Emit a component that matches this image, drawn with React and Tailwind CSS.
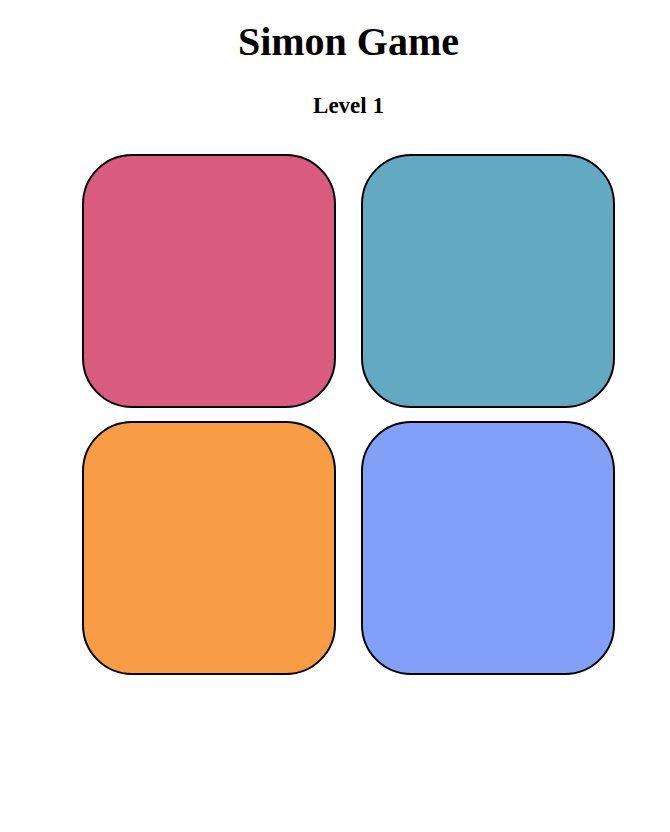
export default function App() {
  const serif = { fontFamily: '"Liberation Serif", "Times New Roman", serif' };
  return (
    <div className="w-[697px] flex flex-col items-center bg-white" style={serif}>
      <h1 className="mt-[20px] text-[40px] leading-[44px] font-bold text-black">Simon Game</h1>
      <h2 className="mt-[29px] text-[23px] leading-[26px] font-bold text-black">Level 1</h2>
      <div className="mt-[35px] grid grid-cols-[254px_254px] gap-x-[25px] gap-y-[13px]">
        <div className="w-[254px] h-[254px] rounded-[50px] border-2 border-black bg-[#d95b7f]" />
        <div className="w-[254px] h-[254px] rounded-[50px] border-2 border-black bg-[#63a9c1]" />
        <div className="w-[254px] h-[254px] rounded-[50px] border-2 border-black bg-[#f99c46]" />
        <div className="w-[254px] h-[254px] rounded-[50px] border-2 border-black bg-[#82a0f8]" />
      </div>
    </div>
  );
}
